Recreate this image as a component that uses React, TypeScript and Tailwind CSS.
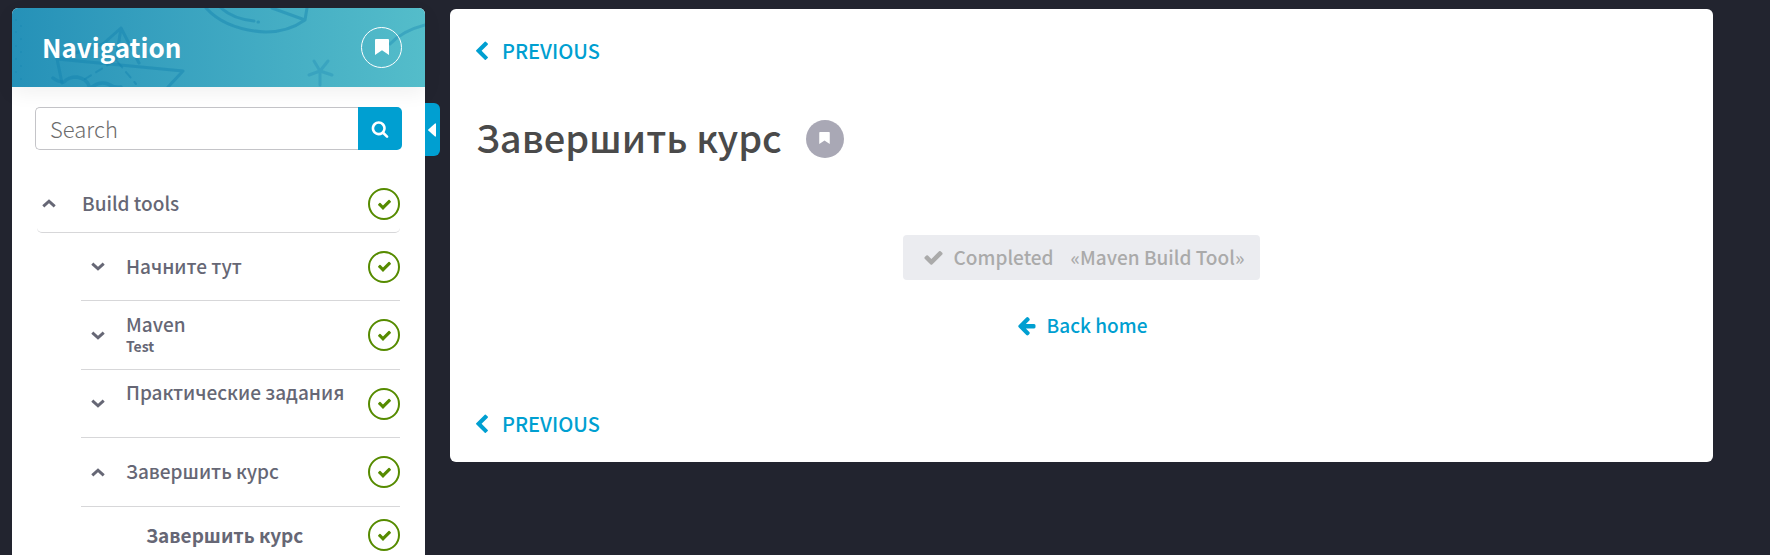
import type { ReactNode } from 'react';

const PATHS = {
  check:
    'M1671 566q0 40-28 68l-724 724-136 136q-28 28-68 28t-68-28l-136-136-362-362q-28-28-28-68t28-68l136-136q28-28 68-28t68 28l294 295 656-657q28-28 68-28t68 28l136 136q28 28 28 68z',
  arrowLeft:
    'M1664 896v128q0 53-32.500 90.500t-84.500 37.500h-704l293 294q38 36 38 90t-38 90l-75 76q-37 37-90 37-52 0-91-37l-651-652q-37-37-37-90 0-52 37-91l651-650q38-38 91-38 52 0 90 38l75 74q38 38 38 91t-38 91l-293 293h704q52 0 84.500 37.500t32.500 90.500z',
  search:
    'M1216 832q0-185-131.500-316.500t-316.500-131.500-316.500 131.500-131.500 316.500 131.500 316.500 316.500 131.500 316.500-131.500 131.500-316.500zm512 832q0 52-38 90t-90 38q-54 0-90-38l-343-342q-179 124-399 124-143 0-273.500-55.500t-225-150-150-225-55.500-273.500 55.500-273.500 150-225 225-150 273.500-55.500 273.500 55.500 225 150 150 225 55.500 273.500q0 220-124 399l343 343q37 37 37 90z',
};

function Icon({ name, className }: { name: keyof typeof PATHS; className: string }) {
  return (
    <svg viewBox="0 0 1792 1792" fill="currentColor" aria-hidden="true" className={className}>
      <path d={PATHS[name]} />
    </svg>
  );
}

function Bookmark({ className }: { className: string }) {
  return (
    <svg viewBox="0 0 14 16" fill="currentColor" aria-hidden="true" className={className}>
      <path d="M1 0h12Q14 0 14 1V16L7 11.200 0 16V1Q0 0 1 0z" />
    </svg>
  );
}

function Chevron({ open }: { open: boolean }) {
  return (
    <svg
      viewBox="0 0 14 9"
      fill="none"
      stroke="currentColor"
      strokeWidth="3"
      aria-hidden="true"
      className={open ? 'h-[9px] w-3.5 shrink-0' : 'h-[9px] w-3.5 shrink-0 rotate-180'}
    >
      <path d="M1.300 7.400 7 2.200l5.700 5.200" />
    </svg>
  );
}

function Done() {
  return (
    <span
      role="img"
      aria-label="Completed"
      className="flex size-8 shrink-0 items-center justify-center rounded-full border-2 border-[#568b00] text-[#568b00]"
    >
      <Icon name="check" className="size-[15px]" />
    </span>
  );
}

function HeaderArt() {
  return (
    <svg
      viewBox="0 0 413 79"
      preserveAspectRatio="xMidYMid slice"
      aria-hidden="true"
      className="absolute inset-0 size-full"
      fill="none"
      stroke="#1180af"
      strokeOpacity="0.42"
      strokeWidth="3"
      strokeLinejoin="round"
      strokeLinecap="round"
    >
      <path d="M45 51 50 75M45 51 91 36 109 20 127 55M109 20 104 52M45 51 171 63 156 79" />
      <path d="M41 70q5 4 11 4 4-5 13-5 10 2 12 9M80 79q8-6 16-3 6 4 13 3" strokeWidth="3.500" />
      <path d="M73 71 104 52 124 76" strokeWidth="2" strokeDasharray="7 6" />
      <path d="M194 0Q214 22 254 24q22 0 39-12l2-12M209 0q12 11 33 13M260 0l33 12M246 14h.5" />
      <path d="M302 53l6 10M316 53l-8 10v14M308 63l-11 4M308 63l12 4" strokeOpacity="0.28" />
      <path d="M378 36Q390 23 413 17" strokeOpacity="0.35" />
      <g stroke="none" fill="#1180af" fillOpacity="0.3">
        <circle cx="4" cy="12" r="1" />
        <circle cx="4" cy="24" r="1" />
        <circle cx="4" cy="38" r="1" />
        <circle cx="4" cy="51" r="1" />
        <circle cx="4" cy="64" r="1" />
        <circle cx="9" cy="18" r="1" />
        <circle cx="9" cy="31" r="1" />
        <circle cx="9" cy="44" r="1" />
        <circle cx="9" cy="58" r="1" />
        <circle cx="9" cy="71" r="1" />
      </g>
    </svg>
  );
}

type SectionProps = { title: ReactNode; note?: string; open?: boolean; tall?: boolean };

function Section({ title, note, open = false, tall = false }: SectionProps) {
  return (
    <li className="flex min-h-[68px] items-center border-b border-[#d7d7d9] pl-2.5 even:min-h-[69px]">
      <button type="button" aria-expanded={open} className="flex flex-1 items-center gap-[21px] text-left">
        <Chevron open={open} />
        <span className={tall ? 'flex flex-col pb-6' : 'flex flex-col pb-0.5'}>
          <span className="text-[19px] leading-6 font-medium whitespace-nowrap">{title}</span>
          {note && <span className="text-[14px] leading-5 font-bold">{note}</span>}
        </span>
      </button>
      <Done />
    </li>
  );
}

function Previous() {
  return (
    <a href="#previous" className="flex w-fit items-center gap-3.5 text-[20px] leading-7 font-medium text-[#009fd1]">
      <svg viewBox="410 0 1040 1792" fill="currentColor" aria-hidden="true" className="h-[21px] w-3">
        <path d="M1427 301l-531 531 531 531q19 19 19 45t-19 45l-166 166q-19 19-45 19t-45-19l-742-742q-19-19-19-45t19-45l742-742q19-19 45-19t45 19l166 166q19 19 19 45t-19 45z" />
      </svg>
      PREVIOUS
    </a>
  );
}

export default function App() {
  return (
    <div className="flex h-screen items-start overflow-hidden bg-[#22242f] pr-[57px] pl-3 font-['Noto_Sans_CJK_SC',sans-serif]">
      <aside className="relative mt-2 w-[413px] shrink-0 rounded-t-md bg-white text-[#666775]">
        <header className="relative flex h-[79px] items-center justify-between overflow-hidden rounded-t-md bg-linear-to-r from-[#2591b8] to-[#54bdca] pr-[23px] pl-[30px] text-white shadow-[0_6px_20px_rgba(0,0,0,0.06)]">
          <HeaderArt />
          <h2 className="relative pb-0.5 text-[26px] leading-9 font-bold">Navigation</h2>
          <button
            type="button"
            aria-label="Bookmarks"
            className="relative flex size-[41px] items-center justify-center rounded-full border border-white pb-0.5"
          >
            <Bookmark className="h-4 w-3.5" />
          </button>
        </header>

        <form role="search" className="mx-[23px] mt-5 flex h-[43px]">
          <input
            type="text"
            aria-label="Search"
            placeholder="Search"
            className="min-w-0 flex-1 rounded-l-[5px] border border-r-0 border-[#c4c4c8] px-3.5 text-[22px] font-light text-[#444] placeholder:text-[#6c6c6c]"
          />
          <button
            type="button"
            aria-label="Run search"
            className="flex w-11 items-center justify-center rounded-r-[5px] bg-[#009fd1] text-white"
          >
            <Icon name="search" className="size-[18px]" />
          </button>
        </form>

        <button
          type="button"
          aria-label="Collapse navigation"
          className="absolute top-[95px] left-full flex h-[53px] w-[15px] items-center justify-center rounded-r-md bg-[#009fd1] pr-0.5 text-white"
        >
          <svg viewBox="0 0 8 14" fill="currentColor" aria-hidden="true" className="h-3.5 w-2">
            <path d="M8 1v12q-.3 1-1 .5L.3 7.600q-.5-.6 0-1.200L7 .5q.7-.5 1 .5z" />
          </svg>
        </button>

        <nav aria-label="Course" className="mx-[25px] mt-[26px]">
          <div className="flex h-[57px] items-center rounded-[5px] border-b border-[#d7d7d9] pl-[5px]">
            <button type="button" aria-expanded="true" className="flex flex-1 items-center gap-[26px] pb-0.5 text-left">
              <Chevron open />
              <span className="text-[19px] leading-6 font-medium">Build tools</span>
            </button>
            <Done />
          </div>
          <ul className="pl-11">
            <Section title="Начните тут" />
            <Section title="Maven" note="Test" />
            <Section title="Практические задания" tall />
            <Section title="Завершить курс" open />
            <li className="flex h-14 items-center justify-between pl-[65px]">
              <a href="#finish" className="text-[19px] leading-6 font-bold">
                Завершить курс
              </a>
              <Done />
            </li>
          </ul>
        </nav>
      </aside>

      <main className="mt-[9px] ml-[25px] min-w-0 flex-1 rounded-md bg-white px-[26px] pt-7 pb-6">
        <Previous />
        <div className="mt-[49px] flex items-center gap-6">
          <h1 className="pb-1 text-[38px] leading-[46px] font-medium text-[#4a4a4a]">Завершить курс</h1>
          <button
            type="button"
            aria-label="Bookmark this page"
            className="flex size-[38px] items-center justify-center rounded-full bg-[#a9a8b5] pb-0.5 text-white"
          >
            <Bookmark className="h-3 w-[11px]" />
          </button>
        </div>
        <div className="mt-[71px] flex flex-col items-center">
          <button
            type="button"
            disabled
            className="flex h-[45px] items-center rounded bg-[#ebecf0] pr-4 pl-5 text-[19px] font-medium text-[#aaaaaa]"
          >
            <Icon name="check" className="mr-2.5 size-[21px]" />
            <span className="mr-[17px]">Completed</span>
            <span>«Maven Build Tool»</span>
          </button>
          <a href="#home" className="mt-[31px] flex items-center gap-2.5 text-[19px] leading-7 font-medium text-[#009fd1]">
            <Icon name="arrowLeft" className="size-[21px]" />
            Back home
          </a>
        </div>
        <div className="mt-[71px]">
          <Previous />
        </div>
      </main>
    </div>
  );
}
